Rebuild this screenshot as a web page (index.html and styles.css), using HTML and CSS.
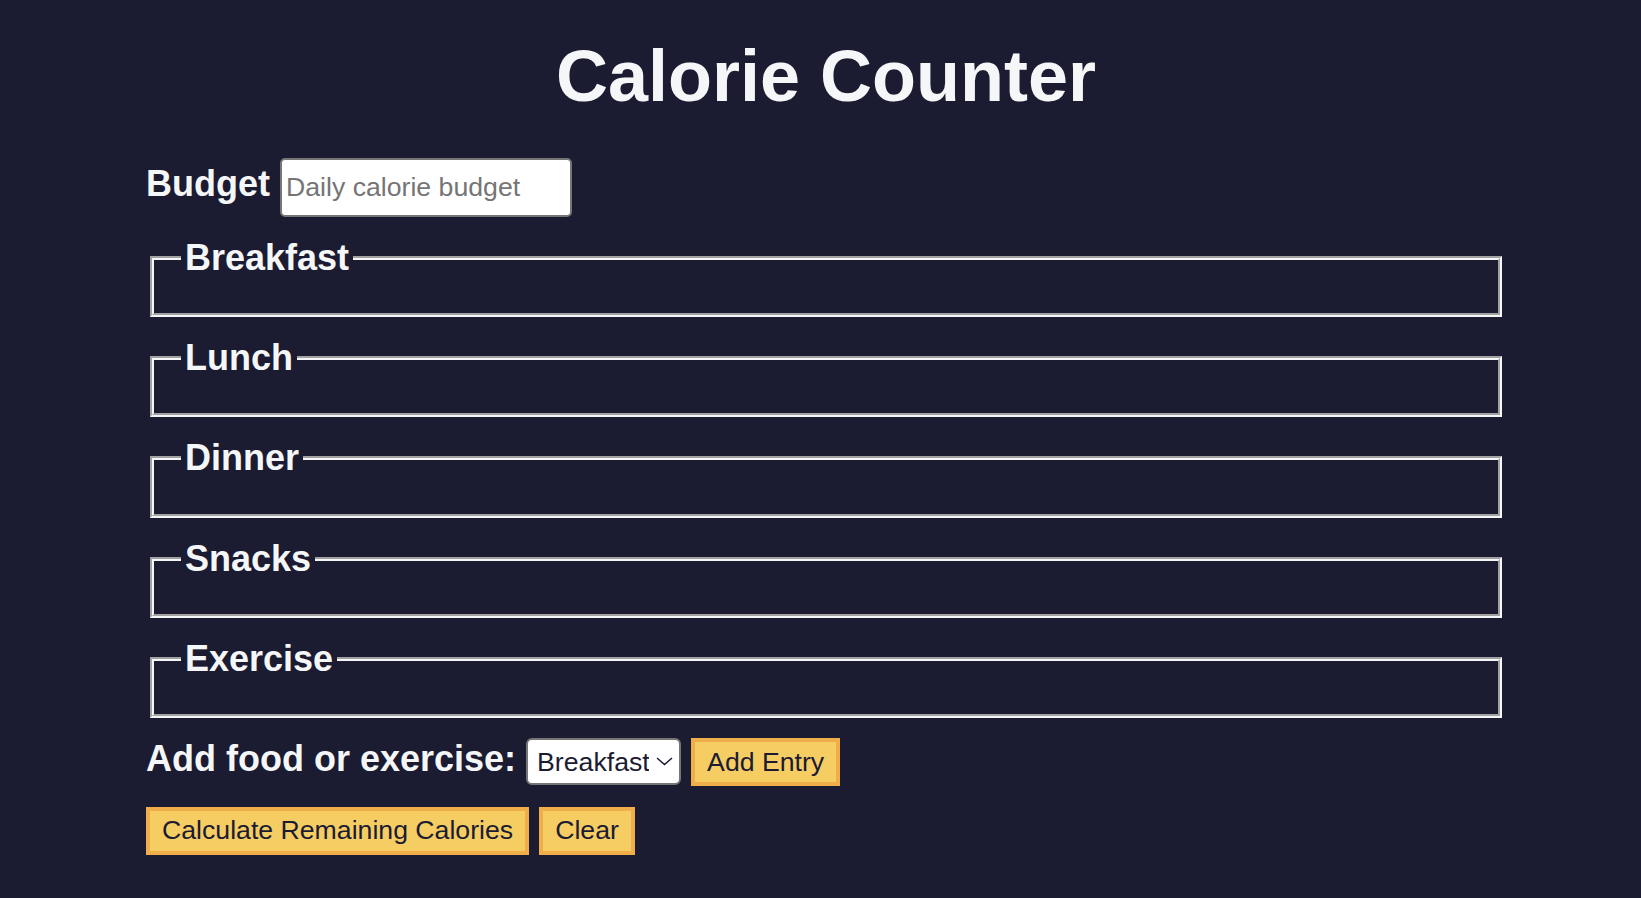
FILE: index.html
```html
<!DOCTYPE html>
<html lang="en">
<head>
<meta charset="utf-8">
<title>Calorie Counter</title>
<link rel="stylesheet" href="styles.css">
</head>
<body>
<main class="page">
  <h1 class="title">Calorie Counter</h1>
  <form class="counter">
    <div class="budget-row">
      <label class="field-label" for="budget">Budget</label>
      <input class="text-input" type="number" id="budget" placeholder="Daily calorie budget">
    </div>
    <fieldset class="meal"><legend class="meal-legend">Breakfast</legend></fieldset>
    <fieldset class="meal"><legend class="meal-legend">Lunch</legend></fieldset>
    <fieldset class="meal"><legend class="meal-legend">Dinner</legend></fieldset>
    <fieldset class="meal"><legend class="meal-legend">Snacks</legend></fieldset>
    <fieldset class="meal"><legend class="meal-legend">Exercise</legend></fieldset>
    <div class="controls">
      <label class="field-label" for="entry-dropdown">Add food or exercise:</label>
      <span class="select-wrap"><select class="entry-select" id="entry-dropdown">
          <option>Breakfast</option>
          <option>Lunch</option>
          <option>Dinner</option>
          <option>Snacks</option>
          <option>Exercise</option>
        </select><svg class="chevron" width="17" height="9" viewBox="0 0 17 9"><polyline points="1,1 8.5,7.5 16,1" fill="none" stroke="#1b1b32" stroke-width="1.5"/></svg></span>
      <button class="btn" type="button">Add Entry</button>
    </div>
    <div class="actions">
      <button class="btn" type="button">Calculate Remaining Calories</button>
      <button class="btn" type="button">Clear</button>
    </div>
  </form>
</main>
</body>
</html>
```

FILE: styles.css
```css
html {
  background: #1b1b32;
}

body {
  margin: 0;
  padding: 0 0 0 11px;
  background: #1b1b32;
  color: #f5f6f7;
  font-family: "Liberation Sans", Arial, Helvetica, sans-serif;
  font-size: 36px;
}

.page {
  width: 1360px;
  margin: 0 auto;
}

.title {
  font-size: 72px;
  font-weight: bold;
  text-align: center;
  margin: 35px 0 41px;
}

.field-label {
  font-weight: bold;
}

.text-input {
  box-sizing: border-box;
  width: 292px;
  height: 59px;
  margin: 0 0 20px;
  padding: 0 4px;
  border: 2px solid #767676;
  border-radius: 5px;
  background: #fff;
  color: #1b1b32;
  font-family: "Liberation Sans", Arial, sans-serif;
  font-size: 26.67px;
  -moz-appearance: textfield;
}

.text-input::placeholder {
  color: #757575;
}

.text-input::-webkit-inner-spin-button,
.text-input::-webkit-outer-spin-button {
  -webkit-appearance: none;
  margin: 0;
}

.meal {
  margin: 0 4px 20px;
  padding: 12.6px 27px 21.6px;
  border: 4px groove #f5f6f7;
}

.meal-legend {
  font-weight: bold;
  padding: 0 4px;
}

.select-wrap {
  position: relative;
  display: inline-block;
}

.entry-select {
  -webkit-appearance: none;
  appearance: none;
  box-sizing: border-box;
  width: 155px;
  height: 47px;
  margin: 0 0 20px;
  padding: 0 30px 0 9px;
  border: 2px solid #767676;
  border-radius: 6px;
  background: #fff;
  color: #1b1b32;
  font-family: "Liberation Sans", Arial, sans-serif;
  font-size: 26.67px;
}

.chevron {
  position: absolute;
  right: 8px;
  top: 19px;
  pointer-events: none;
}

.btn {
  box-sizing: border-box;
  min-height: 48px;
  margin: 0 0 20px;
  padding: 2px 12px;
  border: 4px solid #f0ae4a;
  background: #f6cd63;
  color: #1b1b32;
  font-family: "Liberation Sans", Arial, sans-serif;
  font-size: 26.67px;
  cursor: pointer;
}
```
